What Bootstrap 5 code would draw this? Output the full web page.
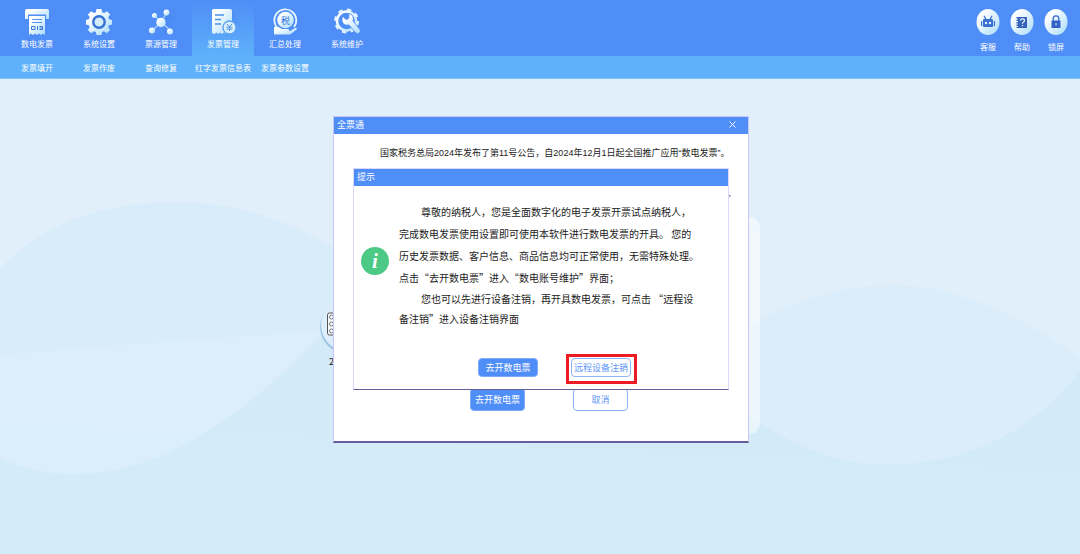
<!DOCTYPE html>
<html lang="zh-CN">
<head>
<meta charset="utf-8">
<meta name="viewport" content="width=device-width, initial-scale=1">
<title>全票通</title>
<link href="https://cdn.jsdelivr.net/npm/bootstrap@5.3.0/dist/css/bootstrap.min.css" rel="stylesheet">
<style>
  :root { --blue: #4f8df7; --sky: #5eb1fa; --edge: #c6c6fd; }
  body { font-family: "Noto Sans CJK SC", sans-serif; font-size: 9px; line-height: 12px; background: #e1effb; color: #222; }
  .topbar { background: var(--blue); height: 56px; padding: 0 7px 0 6px; }
  .subbar { background: var(--sky); height: 23px; padding: 2px 0 0 6px; border-bottom: 1px solid #86c4f8; }
  .topbar a, .subbar a { color: #fff; text-decoration: none; font-size: 8px; line-height: 12px; white-space: nowrap; }
  .cell { width: 62px; flex: none; }
  .tool { padding-top: 8px; gap: 2px; }
  .tool svg { width: 28px; height: 28px; }
  .tool.active { background: linear-gradient(#4f8df7, #5eb1fa); }
  .aid { width: 34px; padding-top: 9px; gap: 6px; }
  .aid svg { width: 24px; height: 26px; }
  .scene { padding: 37px 0 60px; }
  .backdrop-art { inset: 0; z-index: -2; }
  .stage { width: 416px; margin-left: calc(50% - 207px); }
  .sheet { left: 100px; right: -11px; top: 101px; bottom: 9px; background: rgba(255,255,255,.5); border-radius: 10px; z-index: -1; }
  .entry { left: -14px; top: 184px; width: 52px; z-index: -1; }
  .entry-label { padding-left: 10px; font-size: 9px; white-space: nowrap; }
  .win { background: #fff; border: 1px solid var(--edge); border-bottom: 2px solid #625f9a; }
  .win-title { background: var(--blue); color: #fff; height: 17px; padding: 0 11px 2px 3px; line-height: 12px; font-weight: 400; font-size: 9px; margin: 0; }
  .win-close { border: 0; background: none; padding: 0; width: 8px; height: 12px; color: #fff; display: flex; align-items: center; }
  .outer-body { height: 307px; padding: 13px 17px 30px 46px; }
  .outer-actions { padding-left: 90px; }
  .notice { font-family: "Liberation Sans", "Noto Sans CJK SC", sans-serif; font-size: 9px; line-height: 12px; white-space: nowrap; margin: 0; }
  .hint { top: 52px; left: 20px; right: 20px; height: 222px; border-color: #d9d9fd; border-bottom-color: #625f9a; border-bottom-width: 1px; }
  .hint-body { padding: 15px 20px 0 7px; gap: 10px; }
  .info { width: 28px; height: 28px; flex: none; margin-top: 46px; }
  .message { font-size: 10px; line-height: 22px; color: #1c1c1c; }
  .message p { margin: 0; text-indent: 22px; white-space: nowrap; }
  .message p + p { line-height: 20px; }
  .act { font-size: 9px; line-height: 12px; padding: 0; border: 1px solid #8db5f9; white-space: nowrap; border-radius: 4px; color: #5f97f7; background: #fff; }
  .act.fill { background: var(--blue); border-color: #7eacf9; color: #fff; }
  .act.sm { width: 60px; height: 19px; }
  .act.lg { width: 55px; height: 23px; }
  .hint-actions { left: 124px; top: 185px; gap: 28px; }
  .marked { border: 3px solid #ed1c24; padding: 1px 3px 4px 2px; }
</style>
</head>
<body class="min-vh-100 d-flex flex-column">
<svg width="0" height="0" class="position-absolute" aria-hidden="true">
  <defs>
    <linearGradient id="ice" x1="0" y1="0" x2="1" y2="1"><stop offset=".2" stop-color="#fff"/><stop offset="1" stop-color="#a9dcfb"/></linearGradient>
    <linearGradient id="shade" x1="0" y1="0" x2="1" y2="1"><stop offset="0" stop-color="#3672dc" stop-opacity=".4"/><stop offset=".7" stop-color="#3672dc" stop-opacity="0"/></linearGradient>
  </defs>
</svg>

<header>
  <nav class="topbar d-flex justify-content-between" aria-label="主菜单">
    <div class="d-flex">
      <a href="#" class="cell tool d-flex flex-column align-items-center">
        <svg viewBox="0 0 28 28"><path fill="url(#shade)" d="M25 3l8 8v17H12z"/><path fill="url(#ice)" d="M4 1h20q2 0 2 2v8h-3V6.500H5V11H2V3q0-2 2-2z"/><path fill="url(#ice)" d="M6 8h16v19l-2-1.500-2 1.500-2-1.500-2 1.500-2-1.500-2 1.500-2-1.500L6 27z"/><path stroke="#5b95ea" d="M9 11.500h10M9 14.500h10" fill="none"/><path stroke="#3f78d8" fill="none" d="M8.500 18.500h3.500v3H8.500zM14.500 18v4M16.500 18.500h3v3h-3M16.500 20h3"/></svg>
        <span>数电发票</span></a>
      <a href="#" class="cell tool d-flex flex-column align-items-center">
        <svg viewBox="0 0 28 28"><path fill="url(#shade)" d="M23 6l7 7v15H12z"/><path fill="url(#ice)" d="M11.500 1h5l.7 3.300 2 .8L22 3.200l3.200 3.300L23.300 9.300l.9 2L27 12v4.500l-3 .7-.8 2 1.900 2.700-3.300 3.300-2.800-1.900-2 .8-.6 2.900h-4.800l-.7-2.900-2-.8-2.700 1.900L2.900 22l1.800-2.800-.9-2L1 16.500V12l2.900-.7.8-2L2.900 6.500 6.200 3.200 9 5.100l1.900-.8z"/><circle cx="14" cy="14" r="5.700" fill="#d3edfd" stroke="#3672d4" stroke-width="2.400"/></svg>
        <span>系统设置</span></a>
      <a href="#" class="cell tool d-flex flex-column align-items-center">
        <svg viewBox="0 0 28 28"><path fill="url(#shade)" d="M21 3l8 8v17H14z"/><path d="M14 14L7 7M14 14l6-10M14 14l-9 9M14 14l10 9" stroke="#a8d4fb" stroke-width="1.200"/><g fill="url(#ice)"><circle cx="14" cy="14.500" r="4.700"/><circle cx="7.500" cy="7.500" r="2.500"/><circle cx="19.500" cy="4.500" r="2.900"/><circle cx="5" cy="22.500" r="3"/><circle cx="23" cy="23.500" r="3"/></g></svg>
        <span>票源管理</span></a>
      <a href="#" class="cell tool active d-flex flex-column align-items-center" aria-current="page">
        <svg viewBox="0 0 28 28"><path fill="url(#shade)" d="M23 3l7 8v17H16z"/><path fill="url(#ice)" d="M4 1h17q2 0 2 2v22l-2 1-2-1.500-2 1.500-2-1.500-2 1.500-2-1.500L9.500 26l-2-1.500L5.500 26 3 25V2z"/><path stroke="#4c91e5" stroke-width="1.300" d="M6 7h9M6 11.500h6M6 16h6"/><circle cx="20.500" cy="19.500" r="6.500" fill="#d8f0fd" stroke="#5aa0f0" stroke-width="1.300"/><path d="M18 16l2.500 3 2.500-3M20.500 19v4M17.500 19.200h6M17.500 21.200h6" fill="none" stroke="#5695df"/></svg>
        <span>发票管理</span></a>
      <a href="#" class="cell tool d-flex flex-column align-items-center">
        <svg viewBox="0 0 28 28"><path fill="url(#shade)" d="M23 5l8 8v14H10z"/><path d="M7 20.500A11 11 0 1 1 23 19" fill="none" stroke="#e5f6ff" stroke-width="1.700"/><circle cx="14.500" cy="12" r="8.300" fill="url(#ice)"/><text x="14.500" y="15.500" text-anchor="middle" font-size="9" fill="#3272dc">税</text><path fill="url(#ice)" d="M3 19q4-1 8 2h6q2 .5 1 2h1l5-3q2-.5 2 1l-6 5q-1 .5-3 .5H3z"/></svg>
        <span>汇总处理</span></a>
      <a href="#" class="cell tool d-flex flex-column align-items-center">
        <svg viewBox="0 0 28 28"><path fill="url(#shade)" d="M23 4l8 8v16H14z"/><circle cx="13.500" cy="13" r="9.500" fill="none" stroke="url(#ice)" stroke-width="2.500"/><circle cx="13.500" cy="13" r="11.300" fill="none" stroke="#e0f4fe" stroke-width="2.400" stroke-dasharray="4.440 4.440"/><path fill="url(#ice)" stroke="#4a86ea" stroke-width=".8" d="M9.500 8l3.500 3.500 2.500-1L16 7l-1.500-1.500q4-.5 5.500 3 1 2.500 0 4.500l7 8.500q1 2-.7 3.500t-3.500 0L16 17q-4 1-6-1.500T9.500 8z"/></svg>
        <span>系统维护</span></a>
    </div>
    <div class="d-flex">
      <a href="#" class="aid d-flex flex-column align-items-center">
        <svg viewBox="0 0 24 26"><ellipse cx="12" cy="13" rx="11.500" ry="13" fill="url(#ice)"/><path fill="#3b6fd2" d="M7 11q0-1 1-1h1L7.500 7l1-.5L10.500 10h3l2-3.500 1 .5L15 10h1q1 0 1 1v6q0 1-1 1H8q-1 0-1-1zM5 12h1.200v5H5zM17.800 12H19v5h-1.200z"/><circle cx="10" cy="14" r="1.200" fill="#e8f7ff"/><circle cx="14" cy="14" r="1.200" fill="#e8f7ff"/></svg>
        <span>客服</span></a>
      <a href="#" class="aid d-flex flex-column align-items-center">
        <svg viewBox="0 0 24 26"><ellipse cx="12" cy="13" rx="11.500" ry="13" fill="url(#ice)"/><path fill="#3563b8" d="M8 8h9v11H8z"/><path stroke="#3563b8" stroke-width="2" stroke-dasharray="1.500 1" d="M7.500 8v11"/><path d="M10.500 11.500q0-1.700 2-1.700t2 1.700q0 1-1 1.500t-1 1.700M12.500 16v1.300" fill="none" stroke="#e8f7ff" stroke-width="1.200"/></svg>
        <span>帮助</span></a>
      <a href="#" class="aid d-flex flex-column align-items-center">
        <svg viewBox="0 0 24 26"><ellipse cx="12" cy="13" rx="11.500" ry="13" fill="url(#ice)"/><rect x="7.500" y="11.500" width="9" height="7.500" rx=".6" fill="#3260c4"/><path d="M9.200 12V9.500q0-2.700 2.800-2.700t2.800 2.700V12" fill="none" stroke="#3b6acb" stroke-width="1.300"/><path stroke="#dff3ff" d="M12 14v2.500"/></svg>
        <span>锁屏</span></a>
    </div>
  </nav>
  <nav class="subbar d-flex align-items-center" aria-label="子菜单">
    <a href="#" class="cell d-flex justify-content-center">发票填开</a>
    <a href="#" class="cell d-flex justify-content-center">发票作废</a>
    <a href="#" class="cell d-flex justify-content-center">查询修复</a>
    <a href="#" class="cell d-flex justify-content-center">红字发票信息表</a>
    <a href="#" class="cell d-flex justify-content-center">发票参数设置</a>
  </nav>
</header>

<main class="scene position-relative flex-grow-1 overflow-hidden z-0">
  <svg class="backdrop-art position-absolute w-100 h-100" viewBox="0 79 1080 475" preserveAspectRatio="none" aria-hidden="true">
    <path fill="#d3eaf8" d="M0 355L322 331L400 380H1070L1080 365V554H0z"/>
    <path fill="#d9ecfa" d="M0 268C50 218 110 202 178 202C240 202 290 222 340 251V320C285 372 190 474 73 474C45 474 20 468 0 458z"/>
    <path fill="#dceefa" d="M0 355C110 345 220 338 322 331C275 380 190 474 73 474C45 474 20 468 0 458z"/>
    <path fill="#dbedfa" d="M740 332C785 302 840 285 893 285C960 285 1025 320 1080 357V370C1040 428 965 465 887 465C840 465 790 446 740 410z"/>
    <path fill="#d8effb" fill-opacity=".35" d="M0 423L1080 473V554H0z"/>
  </svg>

  <div class="stage position-relative">
    <div class="sheet position-absolute"></div>
    <div class="entry position-absolute">
      <svg width="52" height="56" viewBox="0 0 52 56" aria-hidden="true"><circle cx="27" cy="27" r="26" fill="#9dc6e6"/><circle cx="28" cy="25" r="26" fill="#dceefa"/><rect x="8.500" y="13" width="20" height="22" rx="2" fill="#f7f9fb" stroke="#555"/><g fill="none" stroke="#777"><circle cx="12.500" cy="17" r="2"/><circle cx="12.500" cy="24" r="2"/><circle cx="12.500" cy="31" r="2"/></g></svg>
      <div class="entry-label">2</div>
    </div>

    <section class="win" role="dialog" aria-labelledby="outer-title">
      <div class="win-title d-flex align-items-center justify-content-between">
        <h1 class="win-title p-0 h-auto" id="outer-title">全票通</h1>
        <button type="button" class="win-close" aria-label="关闭"><svg width="7" height="7" viewBox="0 0 7 7"><path d="M.5.500l6 6M6.500.500l-6 6" stroke="#fff"/></svg></button>
      </div>
      <div class="outer-body d-flex flex-column">
        <p class="notice">国家税务总局2024年发布了第11号公告，自2024年12月1日起全国推广应用“数电发票”。</p>
        <p class="notice text-end mt-4 pt-1">,</p>
        <div class="outer-actions d-flex mt-auto gap-5">
          <button type="button" class="act lg fill">去开数电票</button>
          <button type="button" class="act lg">取消</button>
        </div>
      </div>
    </section>

    <section class="win hint position-absolute" role="alertdialog" aria-labelledby="hint-title">
      <h2 class="win-title d-flex align-items-center" id="hint-title">提示</h2>
      <div class="hint-body d-flex">
        <svg class="info" viewBox="0 0 28 28" role="img" aria-label="信息"><circle cx="14" cy="14" r="14" fill="#4bc985"/><text x="14" y="21" text-anchor="middle" font-family="Liberation Serif, serif" font-size="21" font-weight="700" font-style="italic" fill="#fff">i</text></svg>
        <div class="message">
          <p>尊敬的纳税人，您是全面数字化的电子发票开票试点纳税人，<br>完成数电发票使用设置即可使用本软件进行数电发票的开具。 您的<br>历史发票数据、客户信息、商品信息均可正常使用，无需特殊处理。<br>点击“去开数电票”进入“数电账号维护”界面；</p>
          <p>您也可以先进行设备注销，再开具数电发票，可点击 “远程设<br>备注销”进入设备注销界面</p>
        </div>
      </div>
      <div class="hint-actions position-absolute d-flex align-items-start">
        <button type="button" class="act sm fill mt-1">去开数电票</button>
        <div class="marked"><button type="button" class="act sm d-block">远程设备注销</button></div>
      </div>
    </section>
  </div>
</main>
<script src="https://cdn.jsdelivr.net/npm/bootstrap@5.3.0/dist/js/bootstrap.bundle.min.js"></script>
</body>
</html>
